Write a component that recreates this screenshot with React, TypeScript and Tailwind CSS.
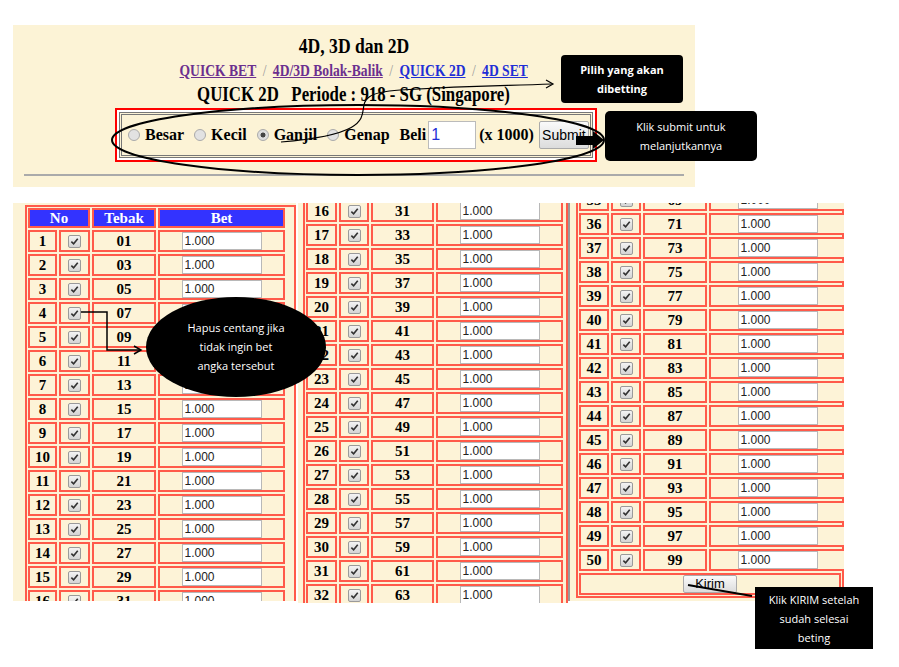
const serif = { fontFamily: '"Liberation Serif", serif' };
const sans = { fontFamily: '"Liberation Sans", sans-serif' };

function Check() {
  return (
    <span className="inline-flex h-[13px] w-[13px] items-center justify-center rounded-[2px] border border-[#9a9a9a] bg-gradient-to-b from-[#f4f4f4] to-[#d4d4d4]">
      <svg width="9" height="9" viewBox="0 0 10 10">
        <path d="M1.5 5.2 L4 7.6 L8.6 2" fill="none" stroke="#333" strokeWidth="1.8" />
      </svg>
    </span>
  );
}

function Cell({ w, children }: { w: string; children?: React.ReactNode }) {
  return (
    <div className={`${w} flex h-[22px] shrink-0 items-center justify-center border-2 border-[#ff5a4a] bg-[#fdf3d7]`}>
      {children}
    </div>
  );
}

function Row({ n, cols }: { n: number; cols: string[] }) {
  const t = String(2 * n - 1).padStart(2, "0");
  return (
    <div className="flex gap-[2px]">
      <Cell w={cols[0]}>
        <span className="text-[15px] font-bold" style={serif}>{n}</span>
      </Cell>
      <Cell w={cols[1]}>
        <Check />
      </Cell>
      <Cell w={cols[2]}>
        <span className="text-[15px] font-bold" style={serif}>{t}</span>
      </Cell>
      <Cell w={cols[3]}>
        <div className="flex h-[18px] w-[80px] items-center border border-[#b8b8b8] bg-white px-[2px] text-[12px] text-[#222]" style={sans}>
          1.000
        </div>
      </Cell>
    </div>
  );
}

function range(a: number, b: number) {
  const r: number[] = [];
  for (let i = a; i <= b; i++) r.push(i);
  return r;
}

export default function App() {
  const c1 = ["w-[29px]", "w-[31px]", "w-[64px]", "w-[127px]"];
  const c2 = ["w-[31px]", "w-[30px]", "w-[63px]", "w-[127px]"];
  const c3 = ["w-[30px]", "w-[30px]", "w-[64px]", "w-[137px]"];
  return (
    <div className="relative h-[667px] w-[899px] overflow-hidden bg-white" style={serif}>
      {/* top panel */}
      <div className="ml-[13px] mt-[25px] flex h-[162px] w-[682px] flex-col items-center bg-[#fcf3d6]">
        <div className="mt-[8px] h-[26px] scale-x-80 text-[22px] font-bold leading-[26px]">4D, 3D dan 2D</div>
        <div className="mt-[1px] flex h-[22px] scale-x-80 items-center gap-[8px] text-[17px] font-bold leading-[22px]">
          <span className="text-[#6b2f8f] underline">QUICK BET</span>
          <span className="font-normal text-[#999]">/</span>
          <span className="text-[#6b2f8f] underline">4D/3D Bolak-Balik</span>
          <span className="font-normal text-[#999]">/</span>
          <span className="text-[#1f2fd6] underline">QUICK 2D</span>
          <span className="font-normal text-[#999]">/</span>
          <span className="text-[#1f2fd6] underline">4D SET</span>
        </div>
        <div className="h-[24px] scale-x-80 whitespace-pre text-[21px] font-bold leading-[24px]">QUICK 2D   Periode : 918 - SG (Singapore)</div>
        <div className="ml-[4px] mt-[2px] h-[54px] w-[482px] border-2 border-[#f00] bg-white p-[2px]">
          <div className="flex h-full w-full items-center border-[3px] border-double border-[#777] bg-[#fcf3d6] pl-[6px] text-[16px] font-bold whitespace-nowrap">
            {["Besar", "Kecil", "Ganjil", "Genap"].map((l) => (
              <span key={l} className="mr-[10px] flex shrink-0 items-center gap-[5px]">
                <span className={`inline-block h-[12px] w-[12px] rounded-full border border-[#aaa] ${l === "Ganjil" ? "bg-[radial-gradient(circle,#444_30%,#ddd_40%)]" : "bg-[#e2e2e2]"}`} />
                <span>{l}</span>
              </span>
            ))}
            <span className="mr-[2px] shrink-0">Beli</span>
            <span className="flex h-[28px] w-[48px] shrink-0 items-center border border-[#bbb] bg-white px-[2px] text-[16px] font-normal text-[#1f2fd6]" style={sans}>1</span>
            <span className="ml-[3px] shrink-0">(x 1000)</span>
            <span className="ml-[5px] flex h-[28px] w-[50px] shrink-0 items-center justify-center rounded-[2px] border border-[#aaa] bg-gradient-to-b from-[#fafafa] to-[#dcdcdc] text-[14px] font-normal" style={sans}>Submit</span>
          </div>
        </div>
        <div className="mt-[12px] h-[3px] w-[660px] border-t-2 border-[#aaa]" />
      </div>

      {/* three table captures */}
      <div className="mt-[16px] flex">
        <div className="ml-[13px] h-[398px] w-[283px] overflow-hidden bg-[#fcf3d6]">
          <div className="ml-[12px] mt-[2px] flex flex-col gap-[2px] border-2 border-[#ff5a4a] p-[1px]">
            <div className="flex gap-[2px]">
              {[["No", "w-[62px]"], ["Tebak", "w-[64px]"], ["Bet", "w-[127px]"]].map(([l, w]) => (
                <div key={l} className={`${w} flex h-[20px] items-center justify-center border-2 border-[#ff5a4a] bg-[#3333ff] text-[15px] font-bold text-white`}>{l}</div>
              ))}
            </div>
            {range(1, 16).map((n) => <Row key={n} n={n} cols={c1} />)}
          </div>
        </div>
        <div className="ml-[2px] h-[400px] w-[270px] overflow-hidden bg-[#fcf3d6]">
          <div className="-mt-[3px] ml-[5px] flex flex-col gap-[2px] border-x-2 border-[#ff5a4a] px-[1px]">
            {range(16, 32).map((n) => <Row key={n} n={n} cols={c2} />)}
          </div>
        </div>
        <div className="h-[398px] w-[276px] overflow-hidden border-l-2 border-[#999] bg-[#fcf3d6]">
          <div className="-mt-[15px] ml-[6px] flex flex-col gap-[2px] border-2 border-t-0 border-[#ff5a4a] p-[1px]">
            {range(35, 50).map((n) => <Row key={n} n={n} cols={c3} />)}
            <div className="flex h-[22px] items-center justify-center border-2 border-[#ff5a4a]">
              <span className="flex h-[18px] w-[54px] items-center justify-center rounded-[2px] border border-[#aaa] bg-gradient-to-b from-[#fafafa] to-[#dcdcdc] text-[13px]" style={sans}>Kirim</span>
            </div>
          </div>
        </div>
      </div>

      {/* annotation drawings */}
      <svg className="pointer-events-none absolute left-0 top-0" width="899" height="667">
        <ellipse cx="358" cy="140" rx="246" ry="35" fill="none" stroke="#000" strokeWidth="2" />
        <path d="M281 142 C 420 130, 320 95, 400 90 S 500 86, 552 84" fill="none" stroke="#000" strokeWidth="1.2" />
        <path d="M546 80 L553 84 L546 88" fill="none" stroke="#000" strokeWidth="1.2" />
        <rect x="576" y="136" width="18" height="9" fill="#000" />
        <path d="M593 131 L604 140 L593 149 Z" fill="#000" />
        <path d="M81 312 H107 V350 H140" fill="none" stroke="#000" strokeWidth="1.5" />
        <path d="M134 346 L141 350 L134 354" fill="none" stroke="#000" strokeWidth="1.5" />
        <ellipse cx="236" cy="347" rx="90" ry="50" fill="#000" />
        <path d="M688 585 L752 596" fill="none" stroke="#000" strokeWidth="2" />
      </svg>
      <div className="absolute left-[236px] top-[318px] w-[150px] -translate-x-1/2 text-center text-[11px] leading-[19px] text-white" style={{ fontFamily: '"Open Sans", sans-serif' }}>
        Hapus centang jika<br />tidak ingin bet<br />angka tersebut
      </div>
      <div className="absolute left-[561px] top-[55px] flex h-[48px] w-[122px] items-center justify-center rounded-[4px] bg-black text-center text-[11px] font-bold leading-[19px] text-white" style={{ fontFamily: '"Open Sans", sans-serif' }}>
        Pilih yang akan<br />dibetting
      </div>
      <div className="absolute left-[605px] top-[111px] flex h-[50px] w-[152px] items-center justify-center rounded-[5px] bg-black text-center text-[11px] leading-[19px] text-white" style={{ fontFamily: '"Open Sans", sans-serif' }}>
        Klik submit untuk<br />melanjutkannya
      </div>
      <div className="absolute left-[755px] top-[587px] flex h-[62px] w-[118px] items-center justify-center bg-black text-center text-[11px] leading-[19px] text-white" style={{ fontFamily: '"Open Sans", sans-serif' }}>
        Klik KIRIM setelah<br />sudah selesai<br />beting
      </div>
    </div>
  );
}
